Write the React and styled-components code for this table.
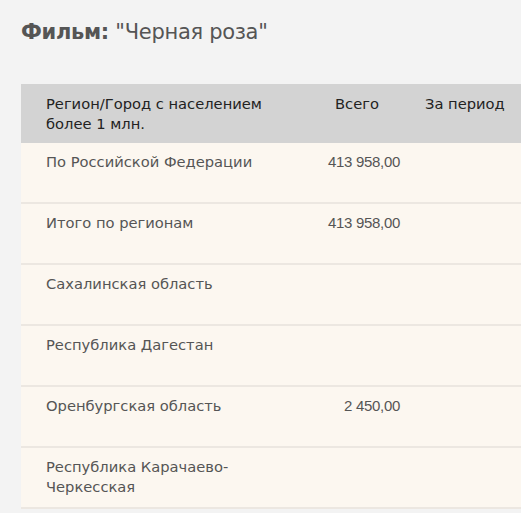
import React from "react";
import styled, { createGlobalStyle } from "styled-components";

const Global = createGlobalStyle`
  html, body { margin: 0; padding: 0; background: #f3f3f3; overflow: hidden; }
  body { font-family: "DejaVu Sans", "Noto Sans", sans-serif; }
`;

const Page = styled.div`
  padding: 19px 0 0 21px;
  width: 700px;
`;

const Title = styled.h1`
  margin: 0 0 39px 0;
  font-size: 21px;
  font-weight: normal;
  color: #555;
  line-height: 26px;
  letter-spacing: -0.3px;
  b { font-weight: bold; }
`;

const Table = styled.div`
  display: grid;
  grid-template-columns: 279px 110px 160px;
`;

const HeadCell = styled.div`
  background: #d3d3d3;
  color: #222;
  font-size: 14.7px;
  line-height: 20px;
  padding: 10px 10px 0 ${p => p.$pl || 0}px;
  text-align: ${p => p.$align || "left"};
  height: 59px;
  box-sizing: border-box;
`;

const Cell = styled.div`
  background: #fcf7f0;
  border-bottom: 2px solid #ece7e1;
  color: #555;
  font-size: 14.7px;
  line-height: 20px;
  padding: 9px 10px 0 ${p => p.$pl || 0}px;
  height: 61px;
  box-sizing: border-box;
  text-align: ${p => p.$align || "left"};
`;

const Num = styled.span`
  font-family: "Liberation Sans", Arial, sans-serif;
  font-size: 15px;
  letter-spacing: -0.3px;
  color: #555;
`;

const rows = [
  ["По Российской Федерации", "413 958,00"],
  ["Итого по регионам", "413 958,00"],
  ["Сахалинская область", ""],
  ["Республика Дагестан", ""],
  ["Оренбургская область", "2 450,00"],
  ["Республика Карачаево-Черкесская", ""],
];

export default function App() {
  return (
    <Page>
      <Global />
      <Title>
        <b>Фильм:</b> "Черная роза"
      </Title>
      <Table>
        <HeadCell $pl={25}>Регион/Город с населением более 1 млн.</HeadCell>
        <HeadCell $align="center" $pl={14}>Всего</HeadCell>
        <HeadCell $pl={15}>За период</HeadCell>
        {rows.map(([name, total], i) => (
          <React.Fragment key={i}>
            <Cell $pl={25}>{name}</Cell>
            <Cell $align="right"><Num>{total}</Num></Cell>
            <Cell />
          </React.Fragment>
        ))}
      </Table>
    </Page>
  );
}
